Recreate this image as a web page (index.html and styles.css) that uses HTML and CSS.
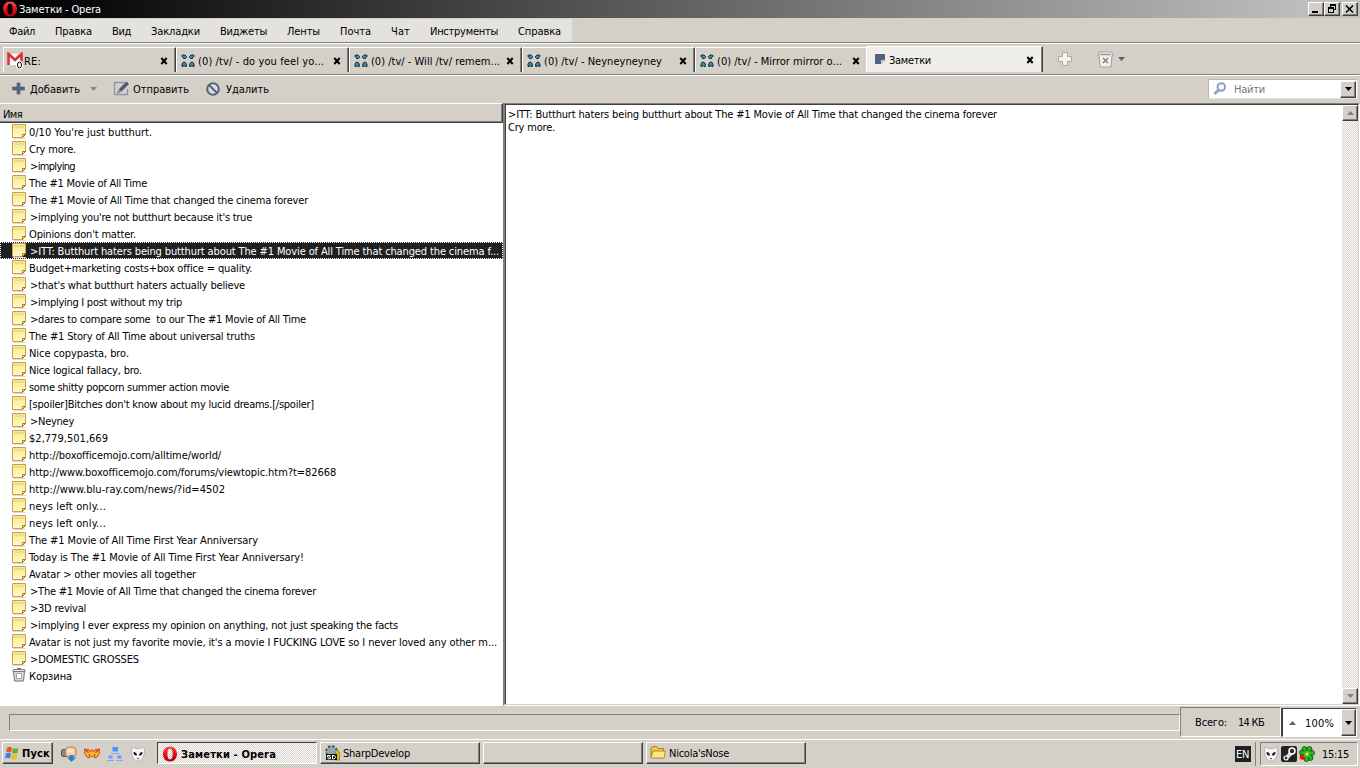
FILE: index.html
```html
<!DOCTYPE html>
<html lang="ru">
<head>
<meta charset="utf-8">
<title>Заметки - Opera</title>
<link rel="stylesheet" href="styles.css">
</head>
<body>
<svg class="defs" width="0" height="0">
  <defs>
    <linearGradient id="g-note" x1="0" y1="0" x2="0" y2="1"><stop offset="0" stop-color="#f6e88e"/><stop offset="1" stop-color="#fffcc4"/></linearGradient>
    <linearGradient id="g-opera" x1="0" y1="0" x2="0" y2="1"><stop offset="0" stop-color="#ff4b45"/><stop offset=".5" stop-color="#e01218"/><stop offset="1" stop-color="#a80008"/></linearGradient>
  </defs>
  <symbol id="note" viewBox="0 0 16 16">
    <path d="M1 14.5h13" stroke="#dcdcdc" fill="none"/>
    <path d="M.5.5h13v10l-3 3H.5z" fill="url(#g-note)" stroke="#c9a04a"/>
    <path d="M2 2h10v2H2z" fill="#eedb84"/>
    <path d="M10.500 13.500v-3h3z" fill="#fff3a0" stroke="#a87c20"/>
  </symbol>
  <symbol id="opera" viewBox="0 0 16 16">
    <path fill="url(#g-opera)" fill-rule="evenodd" d="M8 .5C3.600.5 1 4 1 8s2.600 7.500 7 7.500S15 12 15 8 12.400.5 8 .5zm0 2c1.800 0 2.600 2.300 2.600 5.500S9.800 13.500 8 13.500 5.400 11.200 5.400 8 6.200 2.500 8 2.500z"/>
  </symbol>
  <symbol id="chan" viewBox="0 0 14 14">
    <g fill="#2b95c4" stroke="#10171c" stroke-width=".9">
      <path d="M1.500 1H4l1.500 1.500v1l-1 1h-2L2.300 3.300.7 2.200z"/>
      <path d="M12.500 1H10L8.500 2.500v1l1 1h2l.2-1.200 1.600-1.100z"/>
      <path d="M1 12.500V10l1.500-2h1.200L5.300 10v2.500H4L3 11.300l-.8 1.200z"/>
      <path d="M13 12.500V10l-1.500-2h-1.200L8.700 10v2.500H10l1-1.200.8 1.200z"/>
    </g>
  </symbol>
  <symbol id="cross" viewBox="0 0 8 8"><path d="M1.300 1l5.400 6M6.700 1L1.300 7" stroke="#000" stroke-width="2"/></symbol>
  <symbol id="down" viewBox="0 0 7 4"><path d="M0 0h7L3.500 4z"/></symbol>
  <symbol id="alien" viewBox="0 0 16 16">
    <path d="M2 1c2 0 2 1.500 3 1.500h6c1 0 1-1.500 3-1.500l.5 4c0 3-1.500 10-6.500 10S1.500 8 1.500 5z" fill="#f7f7f7" stroke="#aaa" stroke-width=".8"/>
    <path d="M3.500 6c2 0 3.500 1.500 3.500 3.500-2.500.5-3.500-1-3.500-3.500zM12.500 6C10.500 6 9 7.500 9 9.500c2.500.5 3.500-1 3.500-3.500zM7 12h2l-1 1.500z" fill="#111"/>
  </symbol>
</svg>

<header class="titlebar">
  <svg class="i16" viewBox="0 0 16 16"><use href="#opera"/></svg>
  <span class="title" data-w="82">Заметки - Opera</span>
  <div class="winbtns">
    <button class="btn"><svg width="12" height="10" shape-rendering="crispEdges"><path d="M2 7h6v2H2z"/></svg></button>
    <button class="btn"><svg width="12" height="10" shape-rendering="crispEdges"><path d="M4 0h6v2H4zM4 2h1v2H4zM9 2h1v4H9zM8 5h1v1H8zM2 3h6v2H2zM2 5h1v4H2zM7 5h1v4H7zM2 8h6v1H2z"/></svg></button>
    <button class="btn last"><svg width="12" height="10"><path d="M2 1.500l7 7M9 1.500l-7 7" stroke="#000" stroke-width="1.600"/></svg></button>
  </div>
</header>

<nav class="menu"><div class="menu-items">
  <span data-w="26">Файл</span><span data-w="37">Правка</span><span data-w="19">Вид</span><span data-w="49">Закладки</span><span data-w="47">Виджеты</span><span data-w="33">Ленты</span><span data-w="31">Почта</span><span data-w="19">Чат</span><span data-w="68">Инструменты</span><span data-w="43">Справка</span>
</div></nav>

<div class="tabs">
  <div class="tab mail">
    <svg width="17" height="18" viewBox="0 0 17 18"><path d="M0 1h16v12H0z" fill="#fff"/><path d="M1.500 13V2L8 8l6.500-6v11" fill="none" stroke="#d8323a" stroke-width="2.600"/><path d="M3 1h10L8 6z" fill="#fff" stroke="#e88" stroke-width=".6"/><ellipse cx="12.500" cy="13" rx="2" ry="3" fill="#fff" stroke="#fff" stroke-width="3"/><ellipse cx="12.500" cy="13" rx="2" ry="3" fill="#fff" stroke="#000"/></svg>
    <span data-w="17">RE:</span><svg class="x"><use href="#cross"/></svg></div>
  <div class="tab"><svg class="i14"><use href="#chan"/></svg><span data-w="126">(0) /tv/ - do you feel yo...</span><svg class="x"><use href="#cross"/></svg></div>
  <div class="tab"><svg class="i14"><use href="#chan"/></svg><span data-w="129">(0) /tv/ - Will /tv/ remem...</span><svg class="x"><use href="#cross"/></svg></div>
  <div class="tab"><svg class="i14"><use href="#chan"/></svg><span data-w="118">(0) /tv/ - Neyneyneyney</span><svg class="x"><use href="#cross"/></svg></div>
  <div class="tab"><svg class="i14"><use href="#chan"/></svg><span data-w="125">(0) /tv/ - Mirror mirror o...</span><svg class="x"><use href="#cross"/></svg></div>
  <div class="tab active"><svg width="10" height="10"><path d="M0 0h10v6L6 10H0z" fill="#53637f"/><path d="M6 10V6h4z" fill="#c5cedd"/></svg><span data-w="42">Заметки</span><svg class="x"><use href="#cross"/></svg></div>
  <svg class="newtab" width="14" height="14"><path d="M4.500.5h5v4h4v5h-4v4h-5v-4h-4v-5h4z" fill="#f4f3ee" stroke="#a9a69f"/></svg>
  <svg class="trash" width="17" height="17"><path d="M2.500 1h12l1.500 3-1 1-1 10-1 1H4l-1-1L2 5 1 4z" fill="#f1f0ec" stroke="#aaa7a0" stroke-width="1.200"/><path d="M3 3.500h11" stroke="#999" stroke-width="1.500"/><path d="M6 7l5 5m0-5l-5 5" stroke="#777" stroke-width="1.200"/></svg>
  <svg class="arrow"><use href="#down"/></svg>
</div>

<div class="toolbar">
  <svg class="t-plus" width="13" height="13"><path d="M5 1h3v4h4.500v3H8v4H5V8H.5V5H5z" fill="#53637f" stroke="#53637f" stroke-width=".7"/></svg>
  <span class="t-add" data-w="50">Добавить</span>
  <svg class="arrow light"><use href="#down"/></svg>
  <svg class="t-edit" width="17" height="16"><path d="M12 1.500H1.500v12h13V8" fill="none" stroke="#8b95a6" stroke-width="1.300"/><path d="M4 12.500L6 8l7.500-7.500L16 3 8.500 10.500z" fill="#4d5b73"/><path d="M4 12.500L6 8l2.500 2.500z" fill="#8792a5"/></svg>
  <span data-w="56">Отправить</span>
  <svg class="t-del" width="14" height="14"><circle cx="7" cy="7" r="5.800" fill="#dadada" stroke="#53637f" stroke-width="2"/><path d="M3 3l8 8" stroke="#53637f" stroke-width="2"/></svg>
  <span data-w="43">Удалить</span>
  <div class="search">
    <svg width="14" height="14"><circle cx="8.300" cy="5" r="3.800" fill="#f5f8fd" stroke="#8fa0c4" stroke-width="2"/><path d="M5.500 8L1.500 12" stroke="#8fa0c4" stroke-width="2.600"/></svg>
    <span data-w="31">Найти</span><button class="btn drop"><svg class="arrow"><use href="#down"/></svg></button>
  </div>
</div>

<main class="content">
  <section class="list">
    <div class="head"><span data-w="19">Имя</span></div>
    <div id="rows"></div>
  </section>
  <section class="view">
    <div class="note"><div><span data-w="489">&gt;ITT: Butthurt haters being butthurt about The #1 Movie of All Time that changed the cinema forever</span></div><div><span data-w="47">Cry more.</span></div></div>
    <div class="scroll"><button class="btn"><svg class="arrow up"><use href="#down"/></svg></button><i></i><button class="btn"><svg class="arrow"><use href="#down"/></svg></button></div>
  </section>
</main>

<footer class="status">
  <div class="progress"></div>
  <div class="total"><span data-w="32">Всего:</span><span data-w="26">14 КБ</span></div>
  <div class="zoom"><svg class="arrow up"><use href="#down"/></svg><span data-w="29">100%</span><button class="btn drop"><svg class="arrow"><use href="#down"/></svg></button></div>
</footer>

<div class="taskbar">
  <button class="btn start"><svg width="16" height="16"><path d="M3 2.500q2.500-1.500 5 0L7 7.500q-2.500-1.500-5 0z" fill="#e4572b"/><path d="M9 3q2.500 1.500 5.500 0l-1 5Q11 9 8 8z" fill="#66ae34"/><path d="M2 8.500q2.500-1.500 5 0l-1 5q-2.500-1.500-5 0z" fill="#3f80dc"/><path d="M8 9q2.500 1.500 5.500 0l-1 5Q10 15 7 14z" fill="#f3bf29"/></svg><b data-w="28">Пуск</b></button>
  <div class="quick">
    <svg class="i16"><rect x=".5" y="3.500" width="6" height="7" rx="1.500" fill="#8d8a84" stroke="#5b5854"/><rect x="4.500" y="1" width="10.500" height="10" rx="3.500" fill="#f8cba4" stroke="#b07a50"/><path d="M6.500 3.500h6v3h-6z" fill="#fde6d2"/><path d="M8.500 9h4v2.500h2.500L10.500 16 6 11.500h2.500z" fill="#2186d4"/></svg>
    <svg class="i16"><path d="M0 3l5 .5L6.500 6 8 3.500 9.500 6 11 3.500l5-.5-.5 4-2.500 4-2.500 1L11 8.500 8 11 5 8.500l.5 3.500L3 11 .5 7z" fill="#f8b82c" stroke="#d0401a" stroke-width=".9"/><path d="M1 3.500l3.500 3M15 3.500l-3.500 3" stroke="#d0401a" stroke-width="1.400"/></svg>
    <svg class="i16"><path d="M5 .5h6.500V6H5z" fill="#5b8cf0" stroke="#c3d2ee"/><path d="M1 9h5v4H1zM10 9h5v4h-5z" fill="#6c9af0" stroke="#c3d2ee"/><path d="M4 7.500h8.500M0 14.500h7M9 14.500h7" stroke="#98a8c4"/></svg>
    <svg class="i16"><use href="#alien"/></svg>
  </div>
  <div class="tasks">
    <div class="task on"><svg class="i16"><use href="#opera"/></svg><b data-w="95">Заметки - Opera</b></div>
    <div class="task"><svg class="i16"><circle cx="7.500" cy="6.500" r="5" fill="#b3c4ce" stroke="#35444d" stroke-width="2.500" stroke-dasharray="2.500 1.400"/><circle cx="7.500" cy="6.500" r="4.500" fill="#91a7b3"/><path d="M11 15V8l2-4 2.500 4v7z" fill="#d9bd12" stroke="#71640b" stroke-width=".6"/><path d="M2 9h11v6H2z" fill="#111"/><path d="M6.500 10.500h-3v1.500h3v1.800h-3M8.500 10v4h1.500l1.500-1.500v-1L10 10.500H8.500" stroke="#fff" fill="none"/></svg><span data-w="67">SharpDevelop</span></div>
    <div class="task"></div>
    <div class="task"><svg class="i16"><path d="M1 12.500V3l1.500-1.500h4L8 3.500h5.500V6" fill="#f2c94a" stroke="#a97d18"/><path d="M1 13L3 6h12.500L14 13z" fill="#ffe786" stroke="#b78a1d"/></svg><span data-w="60">Nicola'sNose</span></div>
  </div>
  <div class="lang"><span data-w="13">EN</span></div>
  <div class="tray">
    <svg class="i16"><use href="#alien"/></svg>
    <svg class="i16"><rect width="16" height="16" rx="2" fill="#242424"/><path d="M0 9l4 2 5-6 3 3-5 5" fill="#ddd"/><circle cx="11" cy="5" r="3" fill="#333" stroke="#fff" stroke-width="1.500"/><circle cx="5" cy="12" r="2" fill="#333" stroke="#fff" stroke-width="1.200"/></svg>
    <svg class="i16"><g fill="#29b422" stroke="#07520a" stroke-width=".8"><circle cx="5.500" cy="3" r="2.500"/><circle cx="10.500" cy="3" r="2.500"/><circle cx="13" cy="7" r="2.500"/><circle cx="11.500" cy="12" r="2.500"/><circle cx="7.500" cy="13" r="2.500"/><circle cx="3" cy="6.500" r="2.500"/></g><circle cx="3.500" cy="11" r="2.800" fill="#e21710"/><circle cx="8" cy="8" r="3.500" fill="#34c32c"/><circle cx="8" cy="8" r="1.500" fill="#efe52c"/></svg>
    <span data-w="27">15:15</span>
  </div>
</div>
<script src="app.js"></script>
</body>
</html>
```
FILE: styles.css
```css
* { box-sizing: border-box; }
body {
  margin: 0; width: 1360px; height: 768px; overflow: hidden;
  display: flex; flex-direction: column;
  background: #d4d0c8; color: #000;
  font: 11px/13px "DejaVu Sans Condensed", "DejaVu Sans", sans-serif;
  font-stretch: condensed;
}
span, b { white-space: pre; }
svg { display: block; flex: none; }
.defs { position: absolute; }
.i16 { width: 16px; height: 16px; }
.i14 { width: 14px; height: 14px; }
.x { width: 8px; height: 8px; }
.arrow { width: 7px; height: 4px; }
.up { transform: rotate(180deg); }
.btn {
  font: inherit; color: #000; padding: 0; margin: 0; background: #d4d0c8; display: flex; align-items: center; justify-content: center;
  border: 1px solid; border-color: #fff #404040 #404040 #fff; box-shadow: inset -1px -1px #808080;
}
.titlebar { height: 18px; flex: none; display: flex; align-items: center; padding: 0 2px; background: linear-gradient(90deg, #000 0, #060606 5%, #c0c0c0 97%); }
.title { color: #fff; margin-left: 1px; }
.winbtns { display: flex; margin-left: auto; }
.winbtns .btn { width: 16px; height: 14px; }
.winbtns .last { margin-left: 2px; }
.menu { height: 26px; flex: none; border-bottom: 1px solid #fff; box-shadow: inset 0 -1px #808080; padding-top: 1px; }
.menu-items { width: 572px; height: 23px; background: #e4e2dc; display: flex; align-items: center; gap: 20px; padding: 1px 0 0 9px; }
.tabs { height: 32px; flex: none; display: flex; padding: 3px 0 0 3px; border-bottom: 1px solid #fff; box-shadow: inset 0 -1px #808080; }
.tab {
  width: 173px; height: 25px; display: flex; align-items: center; padding: 2px 7px 0 4px; gap: 3px;
  border-left: 1px solid #fff; border-top: 1px solid #fff; border-right: 1px solid #404040; box-shadow: inset -1px 0 #808080;
}
.tab .x { margin: -1px 0 0 auto; }
.tab .i14 { margin-top: -1px; }
.tab.mail { padding-left: 3px; gap: 0; }
.tab.active { width: 177px; height: 26px; margin: -1px 0 0 -2px; background: #efeeea; padding: 1px 8px 0 8px; gap: 4px; position: relative; }
.tab.active > svg:first-child { margin-top: -2px; }
.newtab { margin: 5px 0 0 15px; }
.trash { margin: 4px 0 0 25px; }
.tabs > .arrow { margin: 10px 0 0 4px; fill: #53637f; }
.toolbar { height: 27px; flex: none; display: flex; align-items: center; padding: 0 2px 0 12px; }
.t-plus { margin-top: -2px; }
.t-add { margin-left: 5px; }
.toolbar > .arrow { margin: -1px 0 0 10px; fill: #858891; }
.t-edit { margin: -1px 3px 0 16px; }
.t-del { margin: -2px 6px 0 17px; }
.search { width: 150px; height: 20px; margin: 0 0 1px auto; display: flex; align-items: center; background: #fff; border: 1px solid #b8b5ae; border-right-color: #e5e2dc; border-bottom-color: #e5e2dc; border-radius: 2px; padding: 0 1px 0 4px; color: #77777c; }
.search span { margin-left: 7px; }
.drop { width: 16px; height: 17px; margin-left: auto; }
.search .drop { margin-left: auto; }
.content { height: 603px; flex: none; display: flex; background: #fff; }
.list { width: 503px; }
.head { height: 20px; padding: 4px 0 0 3px; background: #d4d0c8; border-top: 1px solid #fff; border-right: 1px solid #404040; border-bottom: 1px solid #404040; box-shadow: inset -1px -1px #808080; }
.row { height: 17px; display: flex; padding: 1px 0 0 12px; }
.row span { margin-left: 1px; padding-top: 2px; }
.row .quote { margin-left: 2px; }
.row.sel { background: #202020; color: #fff; outline: 1px dotted #fff; outline-offset: -1px; }
.view { flex: 1; display: flex; border: 1px solid; border-color: #808080 #fff #fff #808080; }
.note { flex: 1; padding: 3px 0 0 3px; border-left: 1px solid #808080; border-top: 1px solid #404040; border-bottom: 1px solid #d4d0c8; box-shadow: inset 1px 0 #404040; }
.scroll { width: 17px; border-right: 1px solid #d4d0c8; border-top: 1px solid #404040; border-bottom: 1px solid #d4d0c8; display: flex; flex-direction: column; fill: #808080; }
.scroll .btn { height: 16px; }
.scroll i { flex: 1; background: repeating-conic-gradient(#fff 0 25%, #d4d0c8 0 50%) 0 0 / 2px 2px; }
.status { height: 33px; flex: none; display: flex; padding: 1px 3px 2px 9px; }
.progress { width: 1171px; height: 17px; margin-top: 7px; border: 1px solid; border-color: #808080 #fff #fff #808080; }
.total { width: 101px; height: 30px; border: 1px solid; border-color: #808080 #fff #fff #808080; display: flex; align-items: center; gap: 11px; padding: 1px 0 0 14px; }
.zoom { width: 76px; height: 29px; margin-top: 1px; background: #fff; border-left: 2px solid #404040; border-top: 1px solid #404040; border-right: 1px solid #fff; border-bottom: 1px solid #fff; display: flex; align-items: center; padding-left: 6px; }
.zoom > .arrow { fill: #53637f; }
.zoom span { margin-left: 9px; padding-top: 1px; }
.zoom .drop { width: 15px; height: 27px; }
.taskbar { height: 29px; flex: none; border-top: 1px solid #fff; display: flex; padding: 2px 2px 0; }
.start { width: 51px; height: 22px; gap: 2px; justify-content: flex-start; padding-left: 1px; }
.quick { display: flex; gap: 7px; margin: 4px 0 0 8px; }
.tasks { display: flex; gap: 3px; margin-left: 11px; }
.task { width: 160px; height: 22px; display: flex; align-items: center; gap: 3px; padding-left: 3px; border: 1px solid; border-color: #fff #404040 #404040 #fff; box-shadow: inset -1px -1px #808080; }
.task.on { padding: 2px 0 0 4px; border-color: #404040 #fff #fff #404040; box-shadow: none; background: repeating-conic-gradient(#fff 0 25%, #d4d0c8 0 50%) 0 0 / 2px 2px; }
.lang { width: 16px; height: 16px; margin: 4px 4px 0 auto; background: #202020; color: #fff; padding: 2px 0 0 1px; }
.tray { width: 98px; height: 24px; display: flex; align-items: center; gap: 2px; padding-left: 2px; margin-left: 5px; border: 1px solid; border-color: #808080 #fff #fff #808080; box-shadow: -4px 0 #d4d0c8, -5px 0 #808080; }
.tray span { margin-left: 5px; }
```
FILE: app.js
```js
// Notes with the pixel width of each label.
const notes = [
  ["0/10 You're just butthurt.", 123], ["Cry more.", 47], [">implying", 46], ["The #1 Movie of All Time", 118],
  ["The #1 Movie of All Time that changed the cinema forever", 279], [">implying you're not butthurt because it's true", 223],
  ["Opinions don't matter.", 107], [">ITT: Butthurt haters being butthurt about The #1 Movie of All Time that changed the cinema f...", 470],
  ["Budget+marketing costs+box office = quality.", 223], [">that's what butthurt haters actually believe", 216],
  [">implying I post without my trip", 153], [">dares to compare some  to our The #1 Movie of All Time", 277],
  ["The #1 Story of All Time about universal truths", 226], ["Nice copypasta, bro.", 100], ["Nice logical fallacy, bro.", 113],
  ["some shitty popcorn summer action movie", 200], ["[spoiler]Bitches don't know about my lucid dreams.[/spoiler]", 285],
  [">Neyney", 45], ["$2,779,501,669", 79], ["http://boxofficemojo.com/alltime/world/", 192],
  ["http://www.boxofficemojo.com/forums/viewtopic.htm?t=82668", 307], ["http://www.blu-ray.com/news/?id=4502", 196],
  ["neys left only...", 77], ["neys left only...", 77], ["The #1 Movie of All Time First Year Anniversary", 229],
  ["Today is The #1 Movie of All Time First Year Anniversary!", 275], ["Avatar > other movies all together", 167],
  [">The #1 Movie of All Time that changed the cinema forever", 287], [">3D revival", 57],
  [">implying I ever express my opinion on anything, not just speaking the facts", 369],
  ["Avatar is not just my favorite movie, it's a movie I FUCKING LOVE so I never loved any other m...", 468],
  [">DOMESTIC GROSSES", 110], ["Корзина", 43]
];
const noteIcon = '<svg class="i16"><use href="#note"/></svg>';
const binIcon = '<svg class="i16"><path d="M1.500 3.500h11l-1 9.500h-9z" fill="#d9d9dc" stroke="#77777c"/><path d="M1.500 1.500h11l.5 2H1z" fill="#f2f2f2" stroke="#77777c"/><path d="M5 .5h4" stroke="#77777c"/><path d="M4.500 5.500h5v5h-5z" fill="#fff" stroke="#a5a5aa"/></svg>';
const rows = document.getElementById("rows");
notes.forEach(([text, width], i) => {
  const row = document.createElement("div");
  row.className = i === 7 ? "row sel" : "row";
  row.innerHTML = i === notes.length - 1 ? binIcon : noteIcon;
  const label = document.createElement("span");
  const quoted = text.startsWith(">");
  if (quoted) label.className = "quote";
  label.textContent = text;
  label.dataset.w = quoted ? width - 1 : width;
  row.append(label);
  rows.append(row);
});

// Track each label so that it fills its width.
document.querySelectorAll("[data-w]").forEach(el => {
  const natural = el.getBoundingClientRect().width;
  el.style.letterSpacing = (el.dataset.w - natural) / el.textContent.length + "px";
});
```
